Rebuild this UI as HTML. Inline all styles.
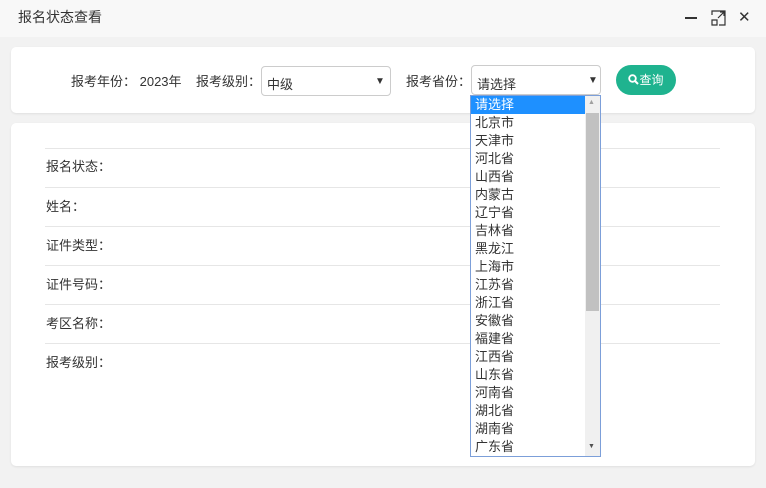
<!DOCTYPE html>
<html><head><meta charset="utf-8"><style>
*{margin:0;padding:0;box-sizing:border-box}
body{width:766px;height:488px;background:#f2f2f2;font-family:"Liberation Sans","Noto Sans CJK SC",sans-serif;font-size:13px;color:#333;position:relative;overflow:hidden}
.title{position:absolute;left:0;top:0;width:766px;height:37px;background:#f8f8f8}
.title span{position:absolute;left:18px;top:7px;font-size:14px;color:#333}
.card{position:absolute;left:11px;width:744px;background:#fff;border-radius:5px;box-shadow:0 1px 2px rgba(0,0,0,.08)}
.a{position:absolute;white-space:nowrap}
.sel{position:absolute;border:1px solid #ccc;border-radius:4px;background:#fff;height:30px}
.line{position:absolute;left:45px;width:675px;height:1px;background:#e6e6e6}
.dd{position:absolute;left:470px;top:95px;width:131px;height:362px;border:1px solid #7c9fd9;background:#fff}
.dd div{height:18px;line-height:18px;padding-left:4px;font-size:13px;color:#333}
</style></head><body>
<div class="title"><span>报名状态查看</span>
<div class="a" style="left:685px;top:17px;width:12px;height:2px;background:#333"></div>
<svg class="a" style="left:711px;top:10px" width="15" height="16" viewBox="0 0 15 16" fill="none" stroke="#333" stroke-width="1.2"><path d="M1 5V1h13v14H8M1 10h5v5H1zM7 8l6-6M9 2h4v4"/></svg>
<div class="a" style="left:738px;top:8px;font-size:15px;color:#333">✕</div>
</div>
<div class="card" style="top:47px;height:66px">
<div class="a" style="left:60px;top:24px">报考年份：&nbsp;2023年</div>
<div class="a" style="left:185px;top:24px">报考级别：</div>
<div class="sel" style="left:250px;top:19px;width:130px"><span class="a" style="left:5px;top:7px">中级</span><span class="a" style="left:113px;top:9px;font-size:10px">▼</span></div>
<div class="a" style="left:395px;top:24px">报考省份：</div>
<div class="sel" style="left:460px;top:18px;width:130px"><span class="a" style="left:5px;top:8px">请选择</span><span class="a" style="left:116px;top:9px;font-size:10px">▼</span></div>
<div class="a" style="left:605px;top:18px;width:60px;height:30px;border-radius:15px;background:#1fb38f;color:#fff;font-size:12px;line-height:30px;text-align:center">
<svg width="11" height="11" viewBox="0 0 11 11" style="vertical-align:-1px"><circle cx="4.5" cy="4.5" r="3.3" stroke="#fff" stroke-width="1.8" fill="none"/><path d="M7 7l3 3" stroke="#fff" stroke-width="2"/></svg>查询</div>
</div>
<div class="card" style="top:123px;height:343px"></div>
<div class="line" style="top:148px"></div><div class="line" style="top:187px"></div><div class="line" style="top:226px"></div><div class="line" style="top:265px"></div><div class="line" style="top:304px"></div><div class="line" style="top:343px"></div>
<div class="a" style="left:46px;top:156px">报名状态：</div>
<div class="a" style="left:46px;top:196px">姓名：</div>
<div class="a" style="left:46px;top:235px">证件类型：</div>
<div class="a" style="left:46px;top:274px">证件号码：</div>
<div class="a" style="left:46px;top:313px">考区名称：</div>
<div class="a" style="left:46px;top:352px">报考级别：</div>
<div class="dd">
<div style="background:#1e90ff;color:#fff;width:114px">请选择</div>
<div>北京市</div><div>天津市</div><div>河北省</div><div>山西省</div><div>内蒙古</div><div>辽宁省</div><div>吉林省</div><div>黑龙江</div><div>上海市</div><div>江苏省</div><div>浙江省</div><div>安徽省</div><div>福建省</div><div>江西省</div><div>山东省</div><div>河南省</div><div>湖北省</div><div>湖南省</div><div>广东省</div>
<div class="a" style="left:114px;top:0;width:15px;height:360px;background:#f0f0f0;padding:0"></div>
<div class="a" style="left:115px;top:17px;width:13px;height:198px;background:#c1c1c1;padding:0"></div>
<div class="a" style="left:117px;top:2px;font-size:7px;color:#a0a0a0;padding:0;height:auto;line-height:10px">▲</div>
<div class="a" style="left:117px;top:346px;font-size:7px;color:#505050;padding:0;height:auto;line-height:10px">▼</div>
</div>
</body></html>
